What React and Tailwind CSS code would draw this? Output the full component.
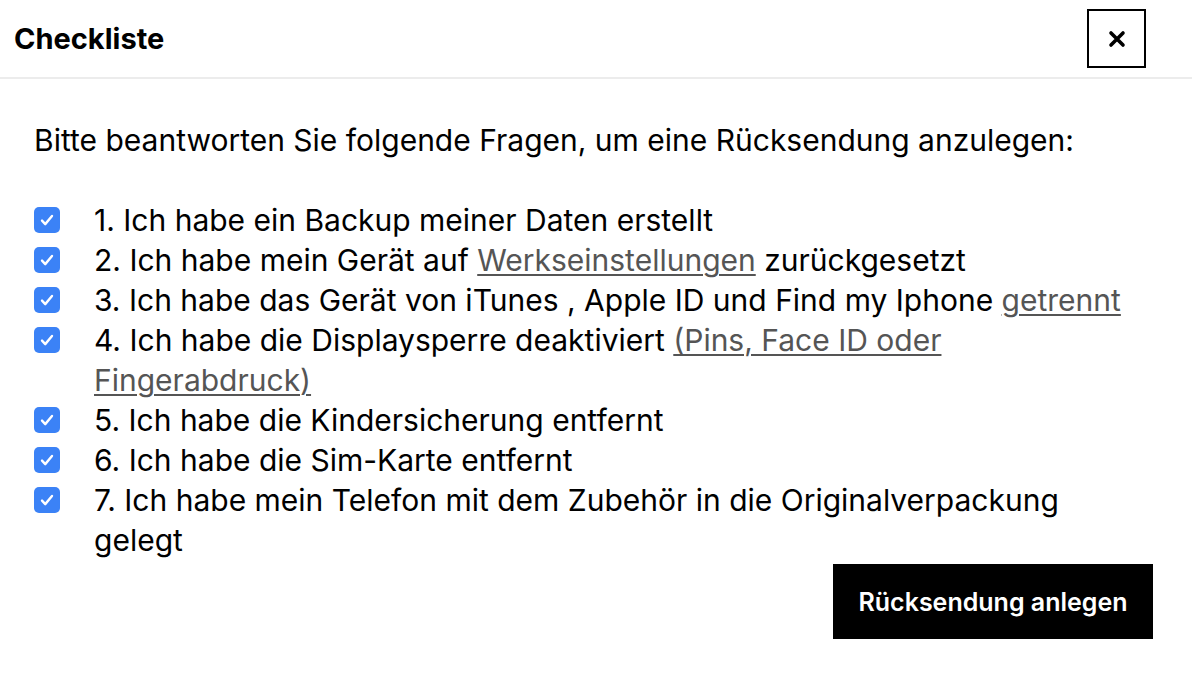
import React, { useState } from "react";

const items = [
  { id: 1, text: "1. Ich habe ein Backup meiner Daten erstellt" },
  { id: 2, text: "2. Ich habe mein Gerät auf ", links: ["Werkseinstellungen"], after: " zurückgesetzt" },
  { id: 3, text: "3. Ich habe das Gerät von iTunes , Apple ID und Find my Iphone ", links: ["getrennt"] },
  { id: 4, text: "4. Ich habe die Displaysperre deaktiviert ", links: ["(Pins, Face ID oder", "Fingerabdruck)"] },
  { id: 5, text: "5. Ich habe die Kindersicherung entfernt" },
  { id: 6, text: "6. Ich habe die Sim-Karte entfernt" },
  { id: 7, text: "7. Ich habe mein Telefon mit dem Zubehör in die Originalverpackung gelegt" },
];

const CheckBox = ({ checked, onClick }) => (
  <button
    onClick={onClick}
    className={`mt-[7px] w-[26px] h-[26px] shrink-0 rounded-[5px] flex items-center justify-center ${
      checked ? "bg-[#3b82f6]" : "bg-white border-2 border-gray-400"
    }`}
  >
    {checked && (
      <svg width="20" height="20" viewBox="0 0 16 16" fill="none">
        <path d="M4 8.5l2.6 2.8L12 4.8" stroke="white" strokeWidth="1.9" strokeLinecap="round" strokeLinejoin="round" />
      </svg>
    )}
  </button>
);

const App = () => {
  const [checked, setChecked] = useState(items.map(() => true));

  const toggle = (i) => setChecked(checked.map((c, j) => (j === i ? !c : c)));

  return (
    <div className="w-[1192px] h-[676px] bg-white text-black font-['Inter',sans-serif]">
      <div className="h-[79px] flex items-center justify-between pl-[14px] pr-[46px] border-b-2 border-[#ececec]">
        <h2 className="text-[29px] font-bold">Checkliste</h2>
        <button className="w-[59px] h-[59px] border-2 border-black flex items-center justify-center">
          <svg width="20" height="20" viewBox="0 0 20 20">
            <path d="M4 4l12 12M16 4L4 16" stroke="black" strokeWidth="3.6" strokeLinecap="round" />
          </svg>
        </button>
      </div>

      <div className="px-[34px] pt-[41px] text-[30px] leading-[40px]">
        <p className="mb-[40px]">Bitte beantworten Sie folgende Fragen, um eine Rücksendung anzulegen:</p>

        <ul>
          {items.map((item, i) => (
            <li key={item.id} className="flex gap-[34px]">
              <CheckBox checked={checked[i]} onClick={() => toggle(i)} />
              <span className="pr-[8px]">
                {item.text}
                {item.links &&
                  item.links.map((l, k) => (
                    <React.Fragment key={k}>
                      {k > 0 && " "}
                      <a href="#" className="text-[#555] underline underline-offset-[3px] decoration-[1.5px]">
                        {l}
                      </a>
                    </React.Fragment>
                  ))}
                {item.after}
              </span>
            </li>
          ))}
        </ul>

        <div className="flex justify-end pr-[5px] mt-[4px]">
          <button className="w-[320px] h-[75px] bg-black text-white text-[25px] font-semibold">
            Rücksendung anlegen
          </button>
        </div>
      </div>
    </div>
  );
};

export default App;
